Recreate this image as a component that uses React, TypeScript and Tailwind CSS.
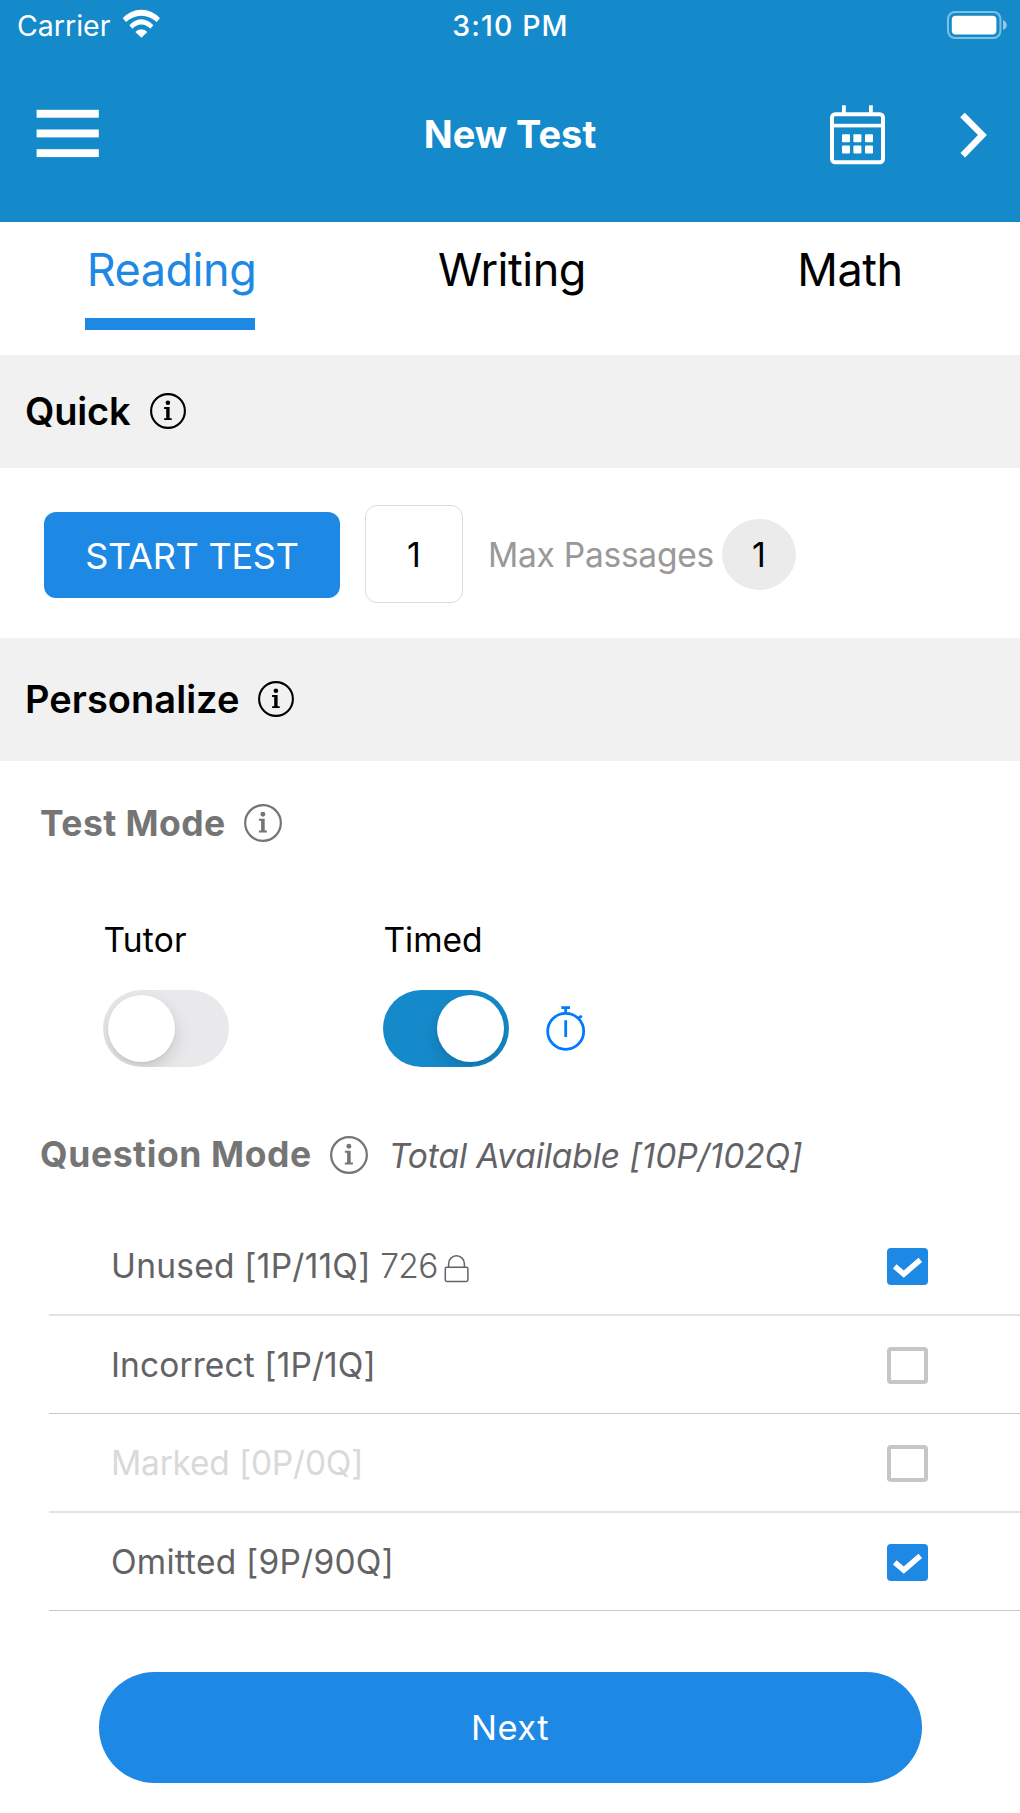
import React from "react";

type IconProps = { className?: string };

function WifiIcon({ className }: IconProps) {
  return (
    <svg viewBox="0 0 116 88" className={className} fill="currentColor">
      <path d="M2 28A74 74 0 0 1 114 28L104 39A66 66 0 0 0 12 39Z" />
      <path d="M22 49A45 45 0 0 1 94 49L85 59A36 36 0 0 0 31 59Z" />
      <path d="M40 69A24 24 0 0 1 76 69L58 86Z" />
    </svg>
  );
}

function BatteryIcon({ className }: IconProps) {
  return (
    <svg viewBox="0 0 60 28" className={className}>
      <rect x="1" y="1" width="52.4" height="26" rx="7" fill="none" stroke="white" strokeOpacity="0.45" strokeWidth="2" />
      <rect x="4.8" y="4.8" width="44.6" height="18.6" rx="4" fill="white" />
      <path d="M56 9C61 11 61 17 56 19Z" fill="white" fillOpacity="0.55" />
    </svg>
  );
}

function MenuIcon({ className }: IconProps) {
  return (
    <svg viewBox="0 0 64 50" className={className} fill="currentColor">
      <rect x="0.6" y="0.8" width="62.2" height="7.9" />
      <rect x="0.6" y="20.5" width="62.2" height="7.9" />
      <rect x="0.6" y="40.2" width="62.2" height="7.9" />
    </svg>
  );
}

function CalendarIcon({ className }: IconProps) {
  return (
    <svg viewBox="0 0 55 60" className={className} fill="currentColor">
      <rect x="2" y="9.3" width="51" height="48" rx="3.2" fill="none" stroke="currentColor" strokeWidth="4" />
      <rect x="2" y="18.8" width="51" height="3.6" />
      <rect x="12" y="0.3" width="3.8" height="8" />
      <rect x="39" y="0.3" width="3.8" height="8" />
      <rect x="12" y="29.2" width="8" height="8" rx="1" />
      <rect x="23.4" y="29.2" width="8" height="8" rx="1" />
      <rect x="35" y="29.2" width="8" height="8" rx="1" />
      <rect x="12" y="40.4" width="8" height="8" rx="1" />
      <rect x="23.4" y="40.4" width="8" height="8" rx="1" />
      <rect x="35" y="40.4" width="8" height="8" rx="1" />
    </svg>
  );
}

function ChevronIcon({ className }: IconProps) {
  return (
    <svg viewBox="0 0 28 46" className={className} fill="none" stroke="currentColor" strokeWidth="6.4">
      <path d="M2.5 3L22.4 23.1L2.8 43.2" />
    </svg>
  );
}

function InfoIcon({ className }: IconProps) {
  return (
    <svg viewBox="0 0 36 36" className={className} fill="currentColor">
      <circle cx="18" cy="18" r="16.9" fill="none" stroke="currentColor" strokeWidth="2.1" />
      <circle cx="17.9" cy="9.7" r="2.3" />
      <path d="M14.1 14H19.6V25.2H21.7V27.1H14.1V25.2H16.2V15.9H14.1Z" />
    </svg>
  );
}

function StopwatchIcon({ className }: IconProps) {
  return (
    <svg viewBox="0 0 42 48" className={className} fill="none" stroke="currentColor" strokeWidth="2.8">
      <circle cx="21.7" cy="27.3" r="18" />
      <path d="M17.3 3.6H26M21.7 3.6V9.5M21.7 16.3V33M34 14.6L37.8 11.8" />
    </svg>
  );
}

function LockIcon({ className }: IconProps) {
  return (
    <svg viewBox="0 0 27 32" className={className} fill="none" stroke="currentColor" strokeWidth="1.5">
      <rect x="2.3" y="15.3" width="22.6" height="14.2" rx="1.4" />
      <path d="M5.6 15.3V11.7A7.9 7.9 0 0 1 21.4 11.7V15.3" />
    </svg>
  );
}

function SectionBar({ title, className }: { title: string; className: string }) {
  return (
    <div className={`flex items-center bg-[#f1f1f1] pl-[25px] text-[38px] font-semibold text-black ${className}`}>
      {title}
      <InfoIcon className="mb-px ml-auto size-9" />
    </div>
  );
}

function Toggle({ on }: { on: boolean }) {
  return (
    <button
      role="switch"
      aria-checked={on}
      className={`flex h-[76.5px] w-[125.5px] items-center overflow-hidden rounded-full px-[4.7px] ${
        on ? "justify-end bg-[#158acb]" : "justify-start bg-[#e9e9eb]"
      }`}
    >
      <span className="size-[67px] rounded-full bg-white shadow-[0_7px_18px_rgba(0,0,0,0.14),0_2px_3px_rgba(0,0,0,0.05)]" />
    </button>
  );
}

function Checkbox({ checked }: { checked: boolean }) {
  if (!checked) {
    return <span className="h-[37px] w-[41.5px] rounded-[4px] border-4 border-[#c6c6c6]" />;
  }
  return (
    <span className="flex h-[37px] w-[41.5px] items-center justify-center rounded-[4px] bg-[#1e88e5] text-white">
      <svg viewBox="0 0 42 37" className="h-full w-full" fill="none" stroke="currentColor" strokeWidth="5.6">
        <path d="M7.8 18.3L17 26.1L33.7 11.7" />
      </svg>
    </span>
  );
}

const rows = [
  { label: "Unused [1P/11Q]", locked: "726", checked: true, style: "border-b-2 border-[#e2e2e2] text-[#636366]", track: "tracking-[0.24px]" },
  { label: "Incorrect [1P/1Q]", checked: false, style: "border-b border-[#c9c9cb] text-[#636366]", track: "tracking-[0.11px]" },
  { label: "Marked [0P/0Q]", checked: false, style: "border-b-2 border-[#e2e2e2] text-[#d9d9d9]", track: "tracking-[-0.2px]" },
  { label: "Omitted [9P/90Q]", checked: true, style: "border-b border-[#c9c9cb] text-[#636366]", track: "tracking-[0.22px]" },
];

const tabs = [
  { label: "Reading", style: "pl-[3px] text-[#1e88e5]", active: true },
  { label: "Writing", style: "pl-1 text-black", active: false },
  { label: "Math", style: "text-black", active: false },
];

export default function App() {
  return (
    <div className="h-[1813px] w-[1020px] overflow-hidden bg-white font-['Inter',sans-serif] whitespace-nowrap text-black">
      <header className="h-[222px] bg-[#158acb] text-white">
        <div className="grid h-[51px] grid-cols-[1fr_auto_1fr] items-center text-[28.5px]">
          <div className="flex items-center pl-[17px]">
            <span className="pt-[2px]">Carrier</span>
            <WifiIcon className="mb-[3px] ml-[11.5px] h-[29.3px] w-[38.7px]" />
          </div>
          <div className="pt-[2px] pl-px font-medium tracking-[1.1px]">3:10 PM</div>
          <BatteryIcon className="mb-px mr-[13px] h-7 w-[60px] justify-self-end" />
        </div>
        <div className="grid h-[168px] grid-cols-[1fr_auto_1fr] items-center">
          <MenuIcon className="mb-[3px] ml-9 h-[50px] w-16" />
          <h1 className="pb-px text-[38px] font-bold">New Test</h1>
          <div className="flex items-center justify-end gap-[75px] pr-8">
            <CalendarIcon className="h-[60px] w-[55px]" />
            <ChevronIcon className="h-[46px] w-7" />
          </div>
        </div>
      </header>

      <nav className="grid h-[133px] grid-cols-3">
        {tabs.map((tab) => (
          <div key={tab.label} className="flex flex-col items-center">
            <span className={`flex h-[95px] items-center text-[45px] tracking-[-0.46px] ${tab.style}`}>
              {tab.label}
            </span>
            {tab.active && <span className="mt-px h-3 w-[170px] bg-[#1e88e5]" />}
          </div>
        ))}
      </nav>

      <SectionBar title="Quick" className="h-[113px] pr-[834px] tracking-[-0.2px]" />

      <div className="flex h-[170px] items-center pt-[2px] pl-11">
        <button className="mt-[2px] h-[86px] w-[296px] rounded-xl bg-[#1e88e5] pt-px text-[36px] tracking-[-0.24px] text-white">
          START TEST
        </button>
        <div className="ml-[25px] flex h-[98px] w-[98px] items-center justify-center rounded-xl border border-[#dcdcdc] pt-px text-[34px]">
          1
        </div>
        <span className="ml-[25px] pt-[3px] text-[33.5px] tracking-[-0.25px] text-[#999999]">Max Passages</span>
        <span className="mt-px ml-[8px] flex h-[71px] w-[74px] items-center justify-center rounded-[50%] bg-[#ebebeb] text-[34px]">
          1
        </span>
      </div>

      <SectionBar title="Personalize" className="h-[123px] pr-[726.5px] tracking-[0.04px]" />

      <section>
        <div className="flex h-[124px] items-center pl-10 text-[35.5px] font-bold tracking-[0.43px] text-[#757575]">
          <span className="pt-px">Test Mode</span>
          <InfoIcon className="ml-[18px] size-[38px]" />
        </div>
        <div className="flex pt-[25px]">
          <div className="ml-[103px] w-[280px]">
            <div className="flex h-[60px] items-center pl-[0.5px] text-[33.5px] tracking-[0.2px]">Tutor</div>
            <div className="mt-5">
              <Toggle on={false} />
            </div>
          </div>
          <div>
            <div className="flex h-[60px] items-center pl-[0.5px] text-[33.5px]">Timed</div>
            <div className="mt-5 flex items-center">
              <Toggle on />
              <StopwatchIcon className="ml-[35px] h-12 w-[42px] text-[#007aff]" />
            </div>
          </div>
        </div>
      </section>

      <section>
        <div className="mt-[26.5px] flex h-[124px] items-center pl-10 text-[#757575]">
          <h2 className="text-[35.5px] font-bold tracking-[0.6px]">Question Mode</h2>
          <InfoIcon className="ml-[18px] size-[38px]" />
          <span className="ml-[21px] pt-[2px] text-[33.5px] tracking-[-0.06px] text-[#636366] italic">
            Total Available [10P/102Q]
          </span>
        </div>
        <ul className="ml-[49px]">
          {rows.map((row) => (
            <li key={row.label} className={`box-content flex h-[97px] items-center pr-[92px] pl-[62px] text-[33.5px] ${row.style}`}>
              <span className={`pt-[2px] ${row.track}`}>{row.label}</span>
              {row.locked && (
                <>
                  <span className="ml-[9.5px] pt-[2px] font-light tracking-[-0.65px]">{row.locked}</span>
                  <LockIcon className="mt-1 ml-[5.5px] h-8 w-[27px]" />
                </>
              )}
              <span className="mt-px ml-auto flex">
                <Checkbox checked={row.checked} />
              </span>
            </li>
          ))}
        </ul>
      </section>

      <button className="mt-[60.5px] ml-[98.5px] block h-[111.5px] w-[823px] rounded-full bg-[#1e88e5] pt-[2px] text-[34.5px] tracking-[0.42px] text-white">
        Next
      </button>
    </div>
  );
}
